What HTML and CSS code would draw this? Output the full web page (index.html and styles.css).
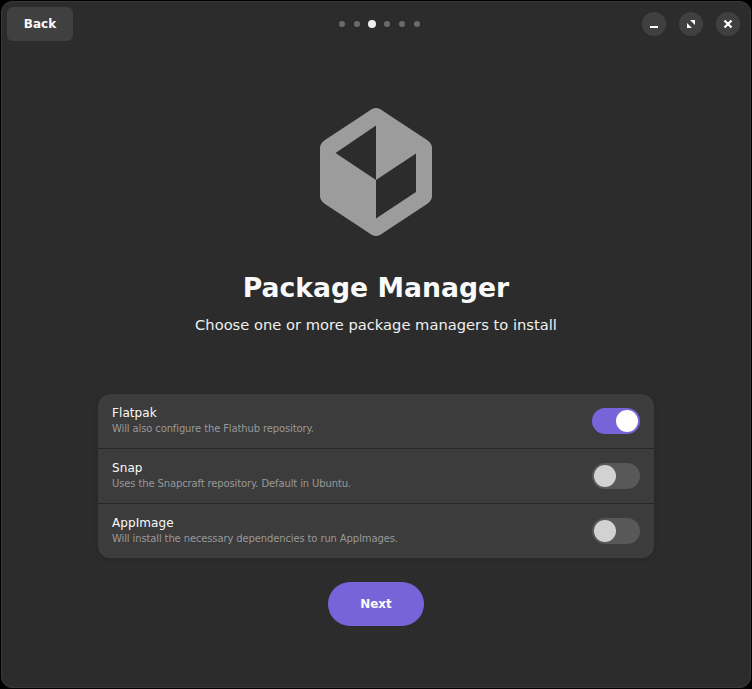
FILE: index.html
```html
<!DOCTYPE html>
<html lang="en">
<head>
<meta charset="utf-8">
<title>Package Manager</title>
<link rel="stylesheet" href="styles.css">
</head>
<body>
<div class="window">
  <header class="headerbar">
    <div class="start"><button class="back">Back</button></div>
    <div class="dots"><i></i><i></i><i class="active"></i><i></i><i></i><i></i></div>
    <div class="controls">
      <button class="control" aria-label="Minimize"><svg viewBox="0 0 24 24"><path d="M8 14h8v2H8z"/></svg></button>
      <button class="control" aria-label="Maximize"><svg viewBox="0 0 24 24"><path d="M11 8h5v5zM8 11v5h5z"/></svg></button>
      <button class="control" aria-label="Close"><svg viewBox="0 0 24 24"><path class="cross" d="M8.500 8.500l7 7M15.500 8.500l-7 7"/></svg></button>
    </div>
  </header>
  <main class="page">
    <svg class="package" viewBox="0 0 112 128"><path fill-rule="evenodd" d="M52 1Q56-1 60 1L107 32Q112 35.500 112 40V88Q112 92.500 107 96L60 127Q56 129 52 127L5 96Q0 92.500 0 88V40Q0 35.500 5 32ZM56 17.500L15.500 45L56 72ZM56 72V110.500L96 84V45.500Z"/></svg>
    <h1>Package Manager</h1>
    <p class="description">Choose one or more package managers to install</p>
    <div class="list">
      <label class="row"><span class="text"><span class="name">Flatpak</span><span class="detail">Will also configure the Flathub repository.</span></span><span class="switch on"></span></label>
      <label class="row"><span class="text"><span class="name">Snap</span><span class="detail">Uses the Snapcraft repository. Default in Ubuntu.</span></span><span class="switch"></span></label>
      <label class="row"><span class="text"><span class="name">AppImage</span><span class="detail">Will install the necessary dependencies to run AppImages.</span></span><span class="switch"></span></label>
    </div>
    <button class="next">Next</button>
  </main>
</div>
</body>
</html>
```
FILE: styles.css
```css
* { box-sizing: border-box; }
body {
  margin: 0;
  height: 689px;
  padding: 1px;
  background: #000;
  color: #fafafa;
  font: 12px/16px "DejaVu Sans", sans-serif;
  overflow: hidden;
}
button { border: 0; padding: 0; color: #fafafa; font: bold 12px/16px "DejaVu Sans", sans-serif; }
.window {
  height: 687px;
  border-radius: 12px;
  background: #2c2c2c;
  box-shadow: inset 0 0 0 1px #383838;
}
.headerbar {
  display: grid;
  grid-template-columns: 1fr auto 1fr;
  align-items: center;
  height: 46px;
  padding: 0 11px 0 6px;
}
.back { width: 66px; height: 34px; border-radius: 6px; background: #404040; display: block; }
.dots { display: flex; align-items: center; gap: 9px; margin: 0 -6px 0 6px; }
.dots i { width: 6px; height: 6px; border-radius: 50%; background: #6b6b6b; }
.dots .active { width: 8px; height: 8px; margin: 0 -1px; background: #eee; }
.controls { display: flex; justify-content: flex-end; gap: 13px; }
.control { width: 24px; height: 24px; border-radius: 50%; background: #404040; }
.control svg { display: block; width: 24px; height: 24px; fill: #fff; }
.cross { stroke: #fff; stroke-width: 2.2; }
.page { display: flex; flex-direction: column; align-items: center; }
.package { width: 112px; height: 128px; margin-top: 61px; fill: #9c9c9c; }
h1 { margin: 36px 0 0; font-size: 26.67px; line-height: 32px; }
.description { margin: 11px 0 0; font-size: 14.67px; line-height: 20px; letter-spacing: .02px; color: #f0f0f0; }
.list {
  width: 556px;
  margin-top: 59px;
  border-radius: 12px;
  overflow: hidden;
  background: #3c3c3c;
  box-shadow: 0 0 0 1px #2a2a2a, 0 1px 3px 1px #292929;
}
.row { display: flex; align-items: center; justify-content: space-between; height: 54px; padding: 0 14px; }
.row + .row { height: 55px; border-top: 1px solid #272727; }
.text { display: flex; flex-direction: column; }
.name { line-height: 15px; letter-spacing: .08px; }
.detail { font-size: 10px; line-height: 15px; letter-spacing: -.13px; color: #999; }
.switch { display: flex; width: 48px; height: 26px; padding: 2px; border-radius: 13px; background: #585858; }
.switch::before { content: ""; width: 22px; height: 22px; border-radius: 50%; background: #d2d2d2; }
.switch.on { justify-content: flex-end; background: #7764d8; }
.switch.on::before { background: #fff; }
.next { width: 96px; height: 44px; margin-top: 24px; border-radius: 22px; background: #7764d8; }
```
